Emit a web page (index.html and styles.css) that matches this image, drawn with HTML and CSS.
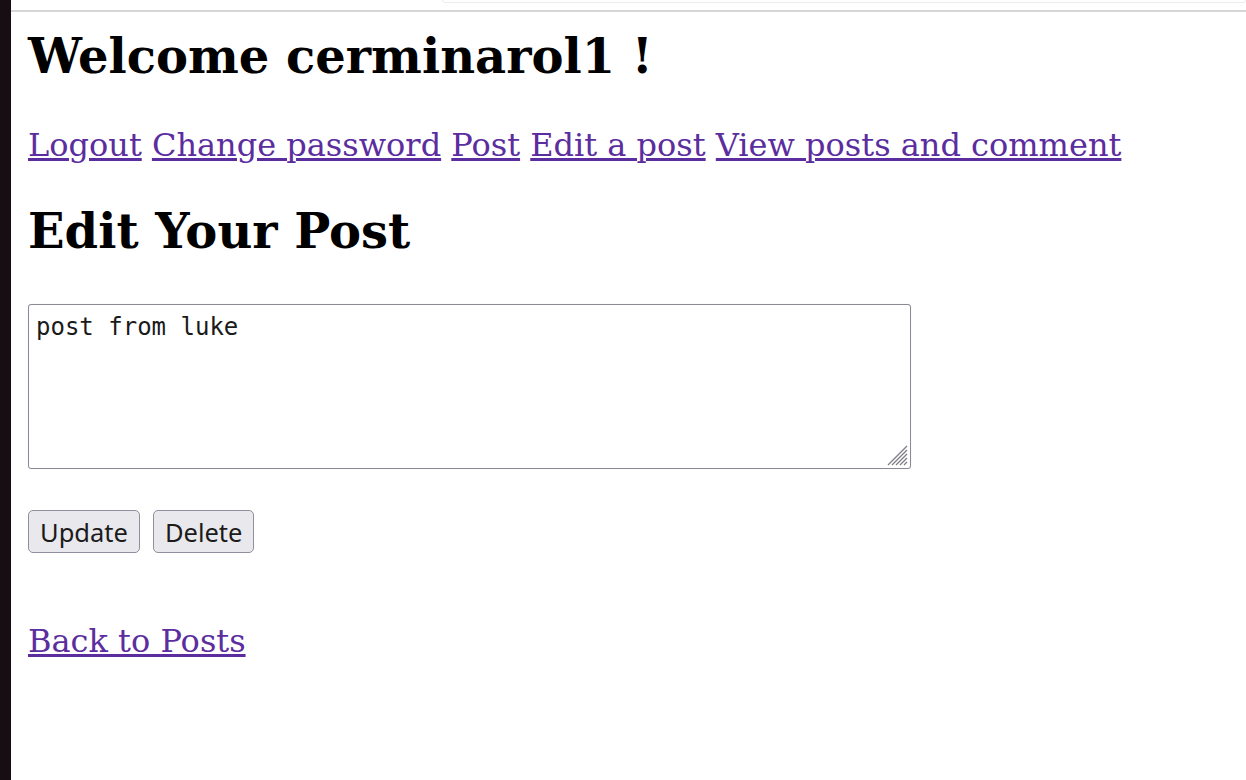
FILE: index.html
```html
<!DOCTYPE html>
<html>
<head>
<meta charset="utf-8">
<title>Edit Post</title>
<link rel="stylesheet" href="styles.css">
</head>
<body>
<div class="frame">
  <div class="edge"></div>
  <div class="page">
    <div class="topbar"><div class="topbox"></div></div>
    <div class="content">
      <h1 class="welcome">Welcome cerminarol1 !</h1>
      <nav class="nav">
        <a href="#">Logout</a>
        <a href="#">Change password</a>
        <a href="#">Post</a>
        <a href="#">Edit a post</a>
        <a href="#">View posts and comment</a>
      </nav>
      <h2 class="title">Edit Your Post</h2>
      <form class="form">
        <div class="field">
          <textarea class="post">post from luke</textarea>
          <svg class="grip" width="24" height="24" viewBox="0 0 24 24">
            <path d="M23 4 L4 23 M23 8 L8 23 M23 12 L12 23 M23 16 L16 23 M23 20 L20 23" stroke="#7d7d88" stroke-width="1.3" fill="none"/>
          </svg>
        </div>
        <div class="actions">
          <button type="button" class="btn">Update</button>
          <button type="button" class="btn">Delete</button>
        </div>
      </form>
      <a href="#" class="back">Back to Posts</a>
    </div>
  </div>
</div>
</body>
</html>
```
FILE: styles.css
```css
html, body {
  margin: 0;
  padding: 0;
  background: #ffffff;
}
body {
  font-family: "DejaVu Serif", serif;
  font-size: 32px;
  color: #000;
}
.frame {
  display: flex;
  height: 780px;
}
.edge {
  width: 11px;
  background: #160e12;
  flex: none;
}
.page {
  flex: 1;
  display: flex;
  flex-direction: column;
}
.topbar {
  height: 10px;
  border-bottom: 2px solid #d6d6d6;
  position: relative;
}
.topbox {
  position: absolute;
  left: 431px;
  right: 0;
  top: -4px;
  height: 5px;
  border: 1px solid #ececec;
  border-radius: 3px;
}
.content {
  padding: 0 17px;
}
.welcome {
  font-size: 48px;
  font-weight: bold;
  margin: 16px 0 0;
  line-height: 56px;
}
.nav {
  margin-top: 42px;
  line-height: 38px;
}
.nav a, .back {
  color: #5b2d9e;
  text-decoration: underline;
}
.title {
  font-size: 48px;
  font-weight: bold;
  margin: 39px 0 0;
  line-height: 56px;
}
.form {
  margin-top: 45px;
}
.field {
  position: relative;
  width: 883px;
}
.post {
  display: block;
  width: 883px;
  height: 165px;
  box-sizing: border-box;
  border: 1px solid #8a8a96;
  border-radius: 3px;
  padding: 8px 7px;
  font-family: "DejaVu Sans Mono", monospace;
  font-size: 24px;
  color: #1a1a1a;
  resize: none;
  box-shadow: 0 0 1px rgba(0, 0, 0, 0.15);
}
.grip {
  position: absolute;
  right: 3px;
  bottom: 3px;
}
.actions {
  display: flex;
  gap: 13px;
  margin-top: 41px;
}
.btn {
  font-family: "Noto Sans", sans-serif;
  font-size: 25.5px;
  height: 43px;
  padding: 0 11px;
  background: #e9e9ed;
  border: 1px solid #8f8f9d;
  border-radius: 5px;
  color: #1b1b1b;
}
.back {
  display: inline-block;
  margin-top: 69px;
  line-height: 38px;
}
```
